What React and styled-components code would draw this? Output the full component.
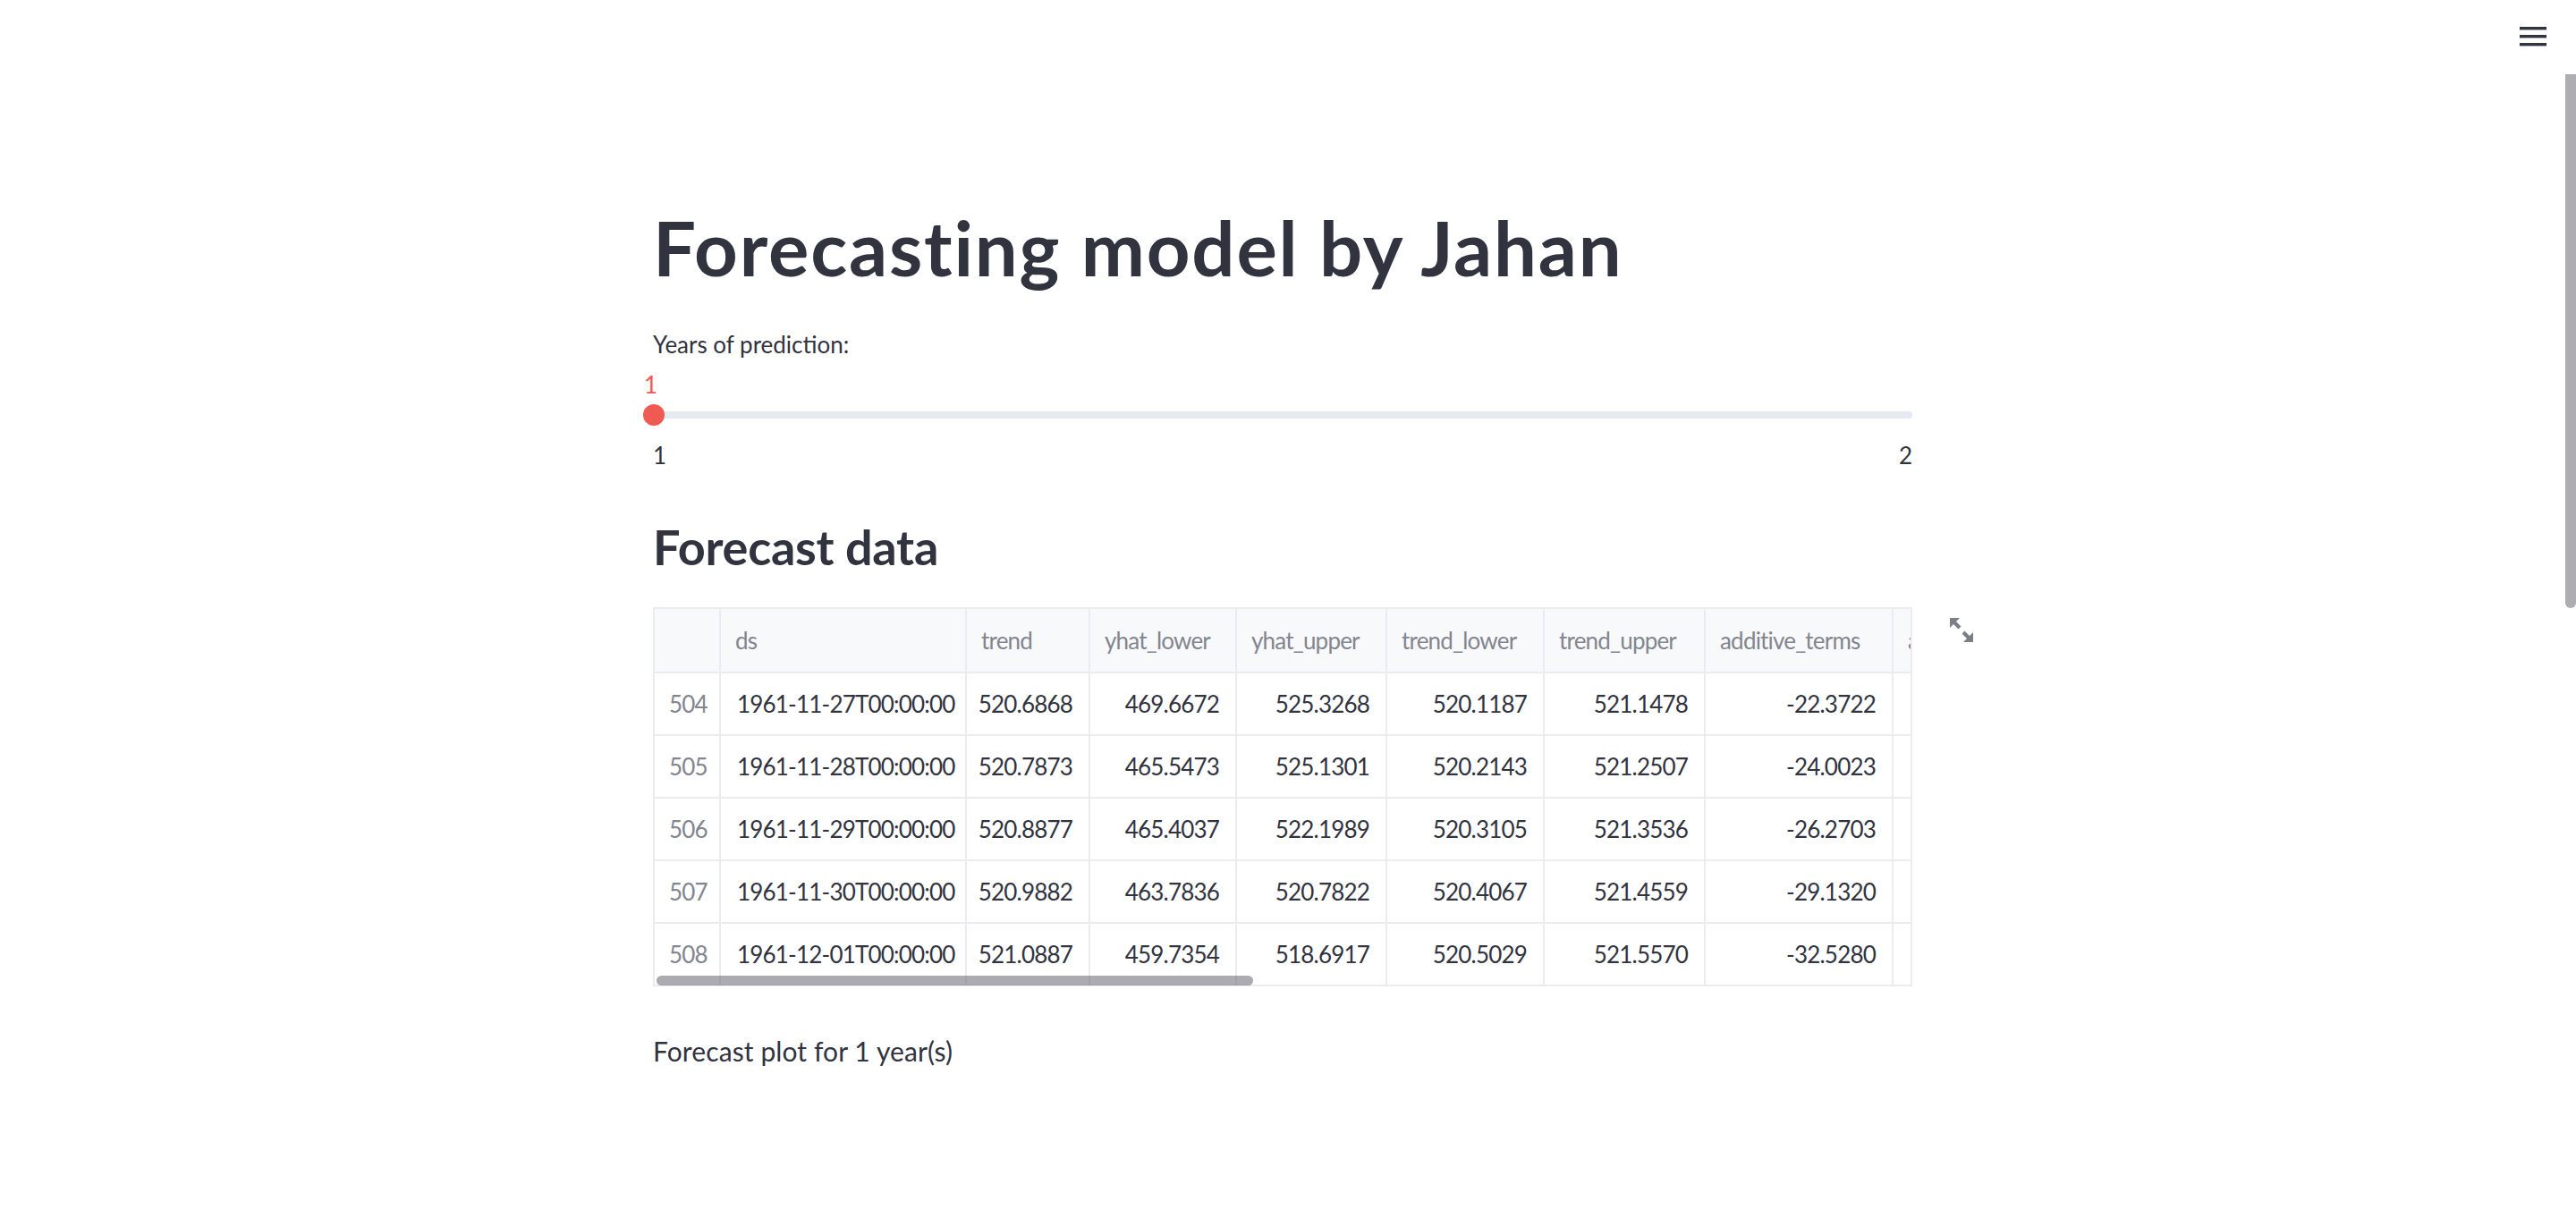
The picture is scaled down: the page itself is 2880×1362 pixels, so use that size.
import React from "react";
import styled, { createGlobalStyle } from "styled-components";

const GlobalStyle = createGlobalStyle`
  html, body {
    margin: 0;
    padding: 0;
    background: #ffffff;
    overflow: hidden;
  }
  body {
    font-family: Lato, "Noto Sans", "Liberation Sans", sans-serif;
    color: #31333f;
  }
  * {
    box-sizing: border-box;
  }
`;

const Shell = styled.div`
  display: flex;
  width: 100%;
  height: 100vh;
`;

const AppView = styled.div`
  flex: 1;
  min-width: 0;
`;

const Header = styled.header`
  height: 92px;
  display: flex;
  justify-content: flex-end;
  align-items: flex-start;
  padding: 29px 21px 0 0;
`;

const MenuButton = styled.button`
  border: none;
  background: transparent;
  padding: 0;
  width: 30px;
  height: 24px;
  cursor: pointer;
  display: flex;
  svg {
    display: block;
  }
`;

const Block = styled.main`
  width: 1408px;
  margin: 0 auto;
  padding-top: 134px;
`;

const Title = styled.h1`
  margin: 0;
  font-size: 85px;
  line-height: 100px;
  font-weight: 700;
  letter-spacing: 1.8px;
  color: #31333f;
`;

const Label = styled.div`
  margin-top: 39px;
  font-size: 26px;
  line-height: 40px;
  color: #31333f;
`;

/* slider */
const SliderBox = styled.div`
  margin-top: 10px;
`;

const ThumbValue = styled.div`
  font-size: 26px;
  line-height: 30px;
  color: #ef5a52;
  margin-left: -10px;
`;

const TrackRow = styled.div`
  position: relative;
  height: 24px;
  margin-top: 7px;
  display: flex;
  align-items: center;
`;

const Track = styled.div`
  flex: 1;
  height: 8px;
  border-radius: 4px;
  background: #e5e9f0;
`;

const Thumb = styled.div`
  position: absolute;
  left: ${(p) => p.$pos}%;
  top: 0;
  width: 24px;
  height: 24px;
  margin-left: -11px;
  border-radius: 50%;
  background: #ef5a52;
`;

const TickRow = styled.div`
  display: flex;
  justify-content: space-between;
  margin-top: 16px;
  font-size: 26px;
  line-height: 34px;
  color: #31333f;
`;

const Subheader = styled.h3`
  margin: 51px 0 0;
  font-size: 54px;
  line-height: 70px;
  font-weight: 700;
  letter-spacing: -0.3px;
  color: #31333f;
`;

/* dataframe */
const TableFrame = styled.div`
  position: relative;
  margin-top: 32px;
`;

const Viewport = styled.div`
  border: 2px solid #ebecef;
  overflow: hidden;
`;

const Grid = styled.div`
  display: grid;
  grid-template-columns: ${(p) => p.$cols};
  width: max-content;
  font-size: 26px;
  letter-spacing: -0.8px;
`;

const HeadCell = styled.div`
  height: 70px;
  display: flex;
  align-items: center;
  padding: 0 16px;
  background: #f8f9fb;
  border-right: 2px solid #ebecef;
  color: #83858f;
  white-space: nowrap;
  overflow: hidden;
`;

const Cell = styled.div`
  height: 70px;
  display: flex;
  align-items: center;
  justify-content: ${(p) => (p.$num ? "flex-end" : "flex-start")};
  padding: 0 18px 0 ${(p) => (p.$index ? "16px" : "18px")};
  border-top: 2px solid #ebecef;
  border-right: 2px solid #ebecef;
  color: ${(p) => (p.$index ? "#83858f" : "#31333f")};
  white-space: nowrap;
  overflow: hidden;
`;

const HScrollThumb = styled.div`
  position: absolute;
  left: 4px;
  bottom: 1px;
  width: 667px;
  height: 11px;
  border-radius: 6px;
  background: rgba(80, 80, 92, 0.48);
`;

const ExpandButton = styled.button`
  position: absolute;
  left: calc(100% + 41px);
  top: 11px;
  width: 28px;
  height: 29px;
  padding: 0;
  border: none;
  background: transparent;
  cursor: pointer;
  svg {
    display: block;
  }
`;

const Caption = styled.p`
  margin: 50px 0 0;
  font-size: 30px;
  line-height: 44px;
  letter-spacing: 0.1px;
  color: #31333f;
`;

const ScrollGutter = styled.div`
  width: 12px;
  flex-shrink: 0;
  padding-top: 83px;
`;

const ScrollThumb = styled.div`
  width: 12px;
  height: 597px;
  border-radius: 0 0 6px 6px;
  background: #adadb2;
`;

const columns = [
  { key: "idx", label: "", width: 74 },
  { key: "ds", label: "ds", width: 275 },
  { key: "trend", label: "trend", width: 138, num: true },
  { key: "yl", label: "yhat_lower", width: 164, num: true },
  { key: "yu", label: "yhat_upper", width: 168, num: true },
  { key: "tl", label: "trend_lower", width: 176, num: true },
  { key: "tu", label: "trend_upper", width: 180, num: true },
  { key: "at", label: "additive_terms", width: 210, num: true },
  { key: "atl", label: "additive_terms_lower", width: 260, num: true },
];

const rows = [
  ["504", "1961-11-27T00:00:00", "520.6868", "469.6672", "525.3268", "520.1187", "521.1478", "-22.3722", "-22.3722"],
  ["505", "1961-11-28T00:00:00", "520.7873", "465.5473", "525.1301", "520.2143", "521.2507", "-24.0023", "-24.0023"],
  ["506", "1961-11-29T00:00:00", "520.8877", "465.4037", "522.1989", "520.3105", "521.3536", "-26.2703", "-26.2703"],
  ["507", "1961-11-30T00:00:00", "520.9882", "463.7836", "520.7822", "520.4067", "521.4559", "-29.1320", "-29.1320"],
  ["508", "1961-12-01T00:00:00", "521.0887", "459.7354", "518.6917", "520.5029", "521.5570", "-32.5280", "-32.5280"],
];

const MenuIcon = () => (
  <svg width="30" height="24" viewBox="0 0 30 24" fill="#31333f">
    <rect x="0" y="1" width="30" height="3.4" />
    <rect x="0" y="10" width="30" height="3.4" />
    <rect x="0" y="19" width="30" height="3.4" />
  </svg>
);

const ExpandIcon = () => (
  <svg width="28" height="29" viewBox="0 0 28 29" fill="#7d7f88">
    <path d="M1 1h11l-4 4 5.5 5.5-3 3L5 8l-4 4z" />
    <path d="M27 28H16l4-4-5.5-5.5 3-3L23 21l4-4z" />
  </svg>
);

const DataFrame = () => (
  <TableFrame>
    <Viewport>
      <Grid $cols={columns.map((c) => `${c.width}px`).join(" ")}>
        {columns.map((c) => (
          <HeadCell key={c.key}>{c.label}</HeadCell>
        ))}
        {rows.map((r) =>
          r.map((v, i) => (
            <Cell key={r[0] + i} $index={i === 0} $num={columns[i].num}>
              {v}
            </Cell>
          ))
        )}
      </Grid>
    </Viewport>
    <HScrollThumb />
    <ExpandButton aria-label="View fullscreen">
      <ExpandIcon />
    </ExpandButton>
  </TableFrame>
);

const YearSlider = ({ value, min, max }) => (
  <SliderBox>
    <ThumbValue>{value}</ThumbValue>
    <TrackRow>
      <Track />
      <Thumb $pos={((value - min) / (max - min)) * 100} />
    </TrackRow>
    <TickRow>
      <span>{min}</span>
      <span>{max}</span>
    </TickRow>
  </SliderBox>
);

export default function App() {
  const years = 1;
  return (
    <>
      <GlobalStyle />
      <Shell>
        <AppView>
          <Header>
            <MenuButton aria-label="Main menu">
              <MenuIcon />
            </MenuButton>
          </Header>
          <Block>
            <Title>Forecasting model by Jahan</Title>
            <Label>Years of prediction:</Label>
            <YearSlider value={years} min={1} max={2} />
            <Subheader>Forecast data</Subheader>
            <DataFrame />
            <Caption>Forecast plot for {years} year(s)</Caption>
          </Block>
        </AppView>
        <ScrollGutter>
          <ScrollThumb />
        </ScrollGutter>
      </Shell>
    </>
  );
}
